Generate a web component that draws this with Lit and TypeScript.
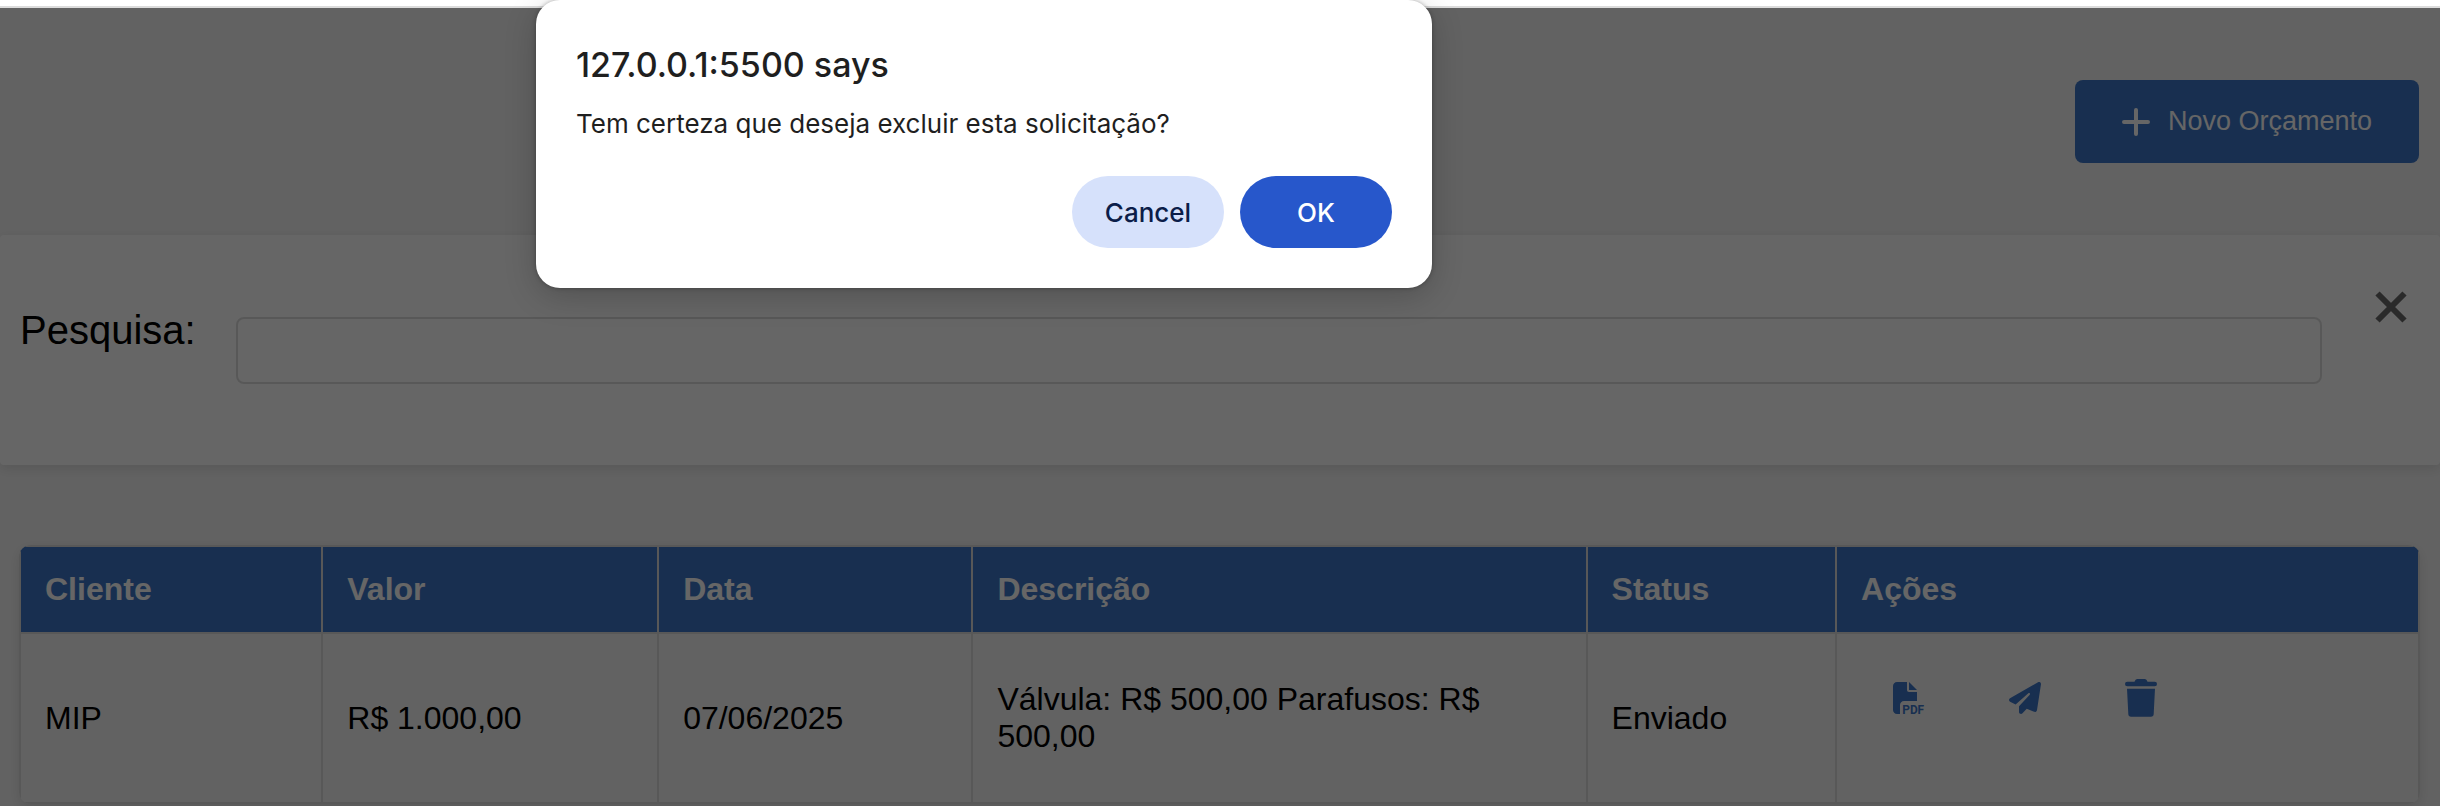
import { LitElement, html, css, svg } from "lit";
import { customElement, state } from "lit/decorators.js";

interface Quote {
  client: string;
  value: string;
  date: string;
  description: string;
  status: string;
}

const icons = {
  plus: svg`<path d="M14 2v24M2 14h24" fill="none" stroke="currentColor" stroke-width="4" stroke-linecap="round"/>`,
  close: svg`<path d="M2.500 2.500l27 27M29.500 2.500l-27 27" fill="none" stroke="currentColor" stroke-width="6"/>`,
  plane: svg`<path fill="currentColor" d="M498.100 5.600c10.100 7 15.400 19.100 13.500 31.200l-64 416c-1.500 9.700-7.400 18.200-16 23s-18.900 5.400-28 1.600L284 427.700l-68.500 74.100c-8.900 9.700-22.900 12.900-35.200 8.100S160 493.200 160 480V396.400c0-4 1.500-7.800 4.200-10.700L331.800 202.800c5.800-6.300 5.600-16-.4-22s-15.700-6.400-22-.7L106 360.800 17.700 316.600C7.100 311.300 .3 300.700 0 288.900s5.900-22.800 16.100-28.700l448-256c10.700-6.100 23.900-5.500 34 1.400z"/>`,
  trash: svg`<g fill="currentColor"><path d="M9.500 3C10 1 11 0 12.500 0h7C21 0 22 1 22.500 3z"/><rect y="2.700" width="32" height="4.600" rx="2.300"/><path d="M2 9.700h28l-1.300 25.300a2.800 2.800 0 0 1-2.800 2.700H6.100A2.800 2.800 0 0 1 3.300 35z"/></g>`,
  pdf: svg`<g fill="currentColor"><path d="M0 64C0 28.700 28.700 0 64 0h160v128c0 17.700 14.300 32 32 32h128v144H176c-35.300 0-64 28.700-64 64v144H64c-35.300 0-64-28.700-64-64zM384 128H256V0z"/><text class="pdf-label" x="148" y="508">PDF</text></g>`,
};

@customElement("app-root")
export class AppRoot extends LitElement {
  @state() private quotes: Quote[] = [
    {
      client: "MIP",
      value: "R$ 1.000,00",
      date: "07/06/2025",
      description: "Válvula: R$ 500,00 Parafusos: R$ 500,00",
      status: "Enviado",
    },
  ];

  static styles = css`
    :host {
      display: block;
      font-family: "Liberation Sans", Arial, sans-serif;
      color: #000;
      position: relative;
    }
    * {
      box-sizing: border-box;
    }
    button {
      font: inherit;
      border: 0;
      padding: 0;
      display: inline-flex;
      align-items: center;
      justify-content: center;
      background: none;
      cursor: pointer;
    }
    svg {
      display: block;
      flex: none;
      overflow: visible;
    }
    .strip {
      height: 8px;
      background: #fff;
      border-bottom: 2px solid #dcdcdc;
    }
    .page {
      position: relative;
      background: #f5f5f5;
      min-height: calc(100vh - 8px);
    }
    .scrim {
      position: absolute;
      inset: 0;
      background: rgba(0, 0, 0, 0.6);
    }
    .toolbar {
      display: flex;
      justify-content: flex-end;
      padding: 72px 21px;
    }
    .new-quote {
      height: 83px;
      padding: 0 47px;
      gap: 18px;
      border-radius: 8px;
      background: #3c76c8;
      color: #fff;
      font-size: 27px;
      line-height: 31px;
    }
    .search {
      display: flex;
      align-items: flex-start;
      height: 230px;
      padding: 52px 20px;
      border-radius: 4px;
      background: #fff;
      box-shadow: 0 4px 12px rgba(0, 0, 0, 0.1);
    }
    .search label {
      font-size: 40px;
      line-height: 46px;
      padding-top: 20px;
      margin-right: 40px;
    }
    .search input {
      flex: 1;
      min-width: 0;
      height: 67px;
      margin-top: 30px;
      padding: 0 20px;
      border: 2px solid #ddd;
      border-radius: 8px;
      background: transparent;
      font: inherit;
      font-size: 32px;
    }
    .close {
      width: 58px;
      height: 40px;
      margin-left: 40px;
      color: #696969;
    }
    .table-card {
      margin: 80px 20px 0 19px;
      border-radius: 12px;
      overflow: hidden;
      box-shadow: 0 4px 12px rgba(0, 0, 0, 0.1);
    }
    table {
      width: 100%;
      table-layout: fixed;
      border-collapse: collapse;
      font-size: 32px;
      line-height: 37px;
    }
    th,
    td {
      padding: 24px;
      border: 2px solid #ddd;
      text-align: left;
    }
    th {
      background: #3c76c8;
      color: #fff;
    }
    .c-client { width: 12.6%; }
    .c-value { width: 14%; }
    .c-date { width: 13.1%; }
    .c-description { width: 25.6%; }
    .c-status { width: 10.4%; }
    .actions {
      display: flex;
      gap: 20px;
      padding-bottom: 40px;
    }
    .actions button {
      width: 96px;
      height: 80px;
      color: #3c76c8;
    }
    .pdf-label {
      font: 700 190px Roboto, sans-serif;
    }
    .dialog {
      position: absolute;
      top: 0;
      left: calc(50% - 684px);
      width: 896px;
      margin: 0;
      padding: 40px;
      border: 0;
      border-radius: 24px;
      background: #fff;
      color: #1f1f1f;
      font-family: Inter, sans-serif;
      box-shadow: 0 8px 32px rgba(0, 0, 0, 0.2), 0 0 4px rgba(0, 0, 0, 0.3);
    }
    .dialog h1 {
      margin: 0 0 14px;
      font-size: 34px;
      font-weight: 500;
      line-height: 50px;
    }
    .dialog p {
      margin: 0 0 32px;
      font-size: 26px;
      line-height: 40px;
    }
    .dialog-buttons {
      display: flex;
      justify-content: flex-end;
      gap: 16px;
    }
    .dialog-buttons button {
      width: 152px;
      height: 72px;
      border-radius: 36px;
      font-size: 26px;
      font-weight: 500;
    }
    .cancel {
      background: #d6e1fb;
      color: #0b1d49;
    }
    .ok {
      background: #2757cb;
      color: #fff;
    }
  `;

  render() {
    return html`
      <div class="strip"></div>
      <main class="page">
        <div class="toolbar">
          <button class="new-quote" type="button">
            <svg width="28" height="28" viewBox="0 0 28 28" aria-hidden="true">${icons.plus}</svg>
            Novo Orçamento
          </button>
        </div>
        <section class="search">
          <label for="search">Pesquisa:</label>
          <input id="search" type="text" />
          <button class="close" type="button" aria-label="Fechar">
            <svg width="32" height="32" viewBox="0 0 32 32">${icons.close}</svg>
          </button>
        </section>
        <div class="table-card">
          <table>
            <thead>
              <tr>
                <th class="c-client">Cliente</th>
                <th class="c-value">Valor</th>
                <th class="c-date">Data</th>
                <th class="c-description">Descrição</th>
                <th class="c-status">Status</th>
                <th>Ações</th>
              </tr>
            </thead>
            <tbody>
              ${this.quotes.map(
                (q) => html`<tr>
                  <td>${q.client}</td>
                  <td>${q.value}</td>
                  <td>${q.date}</td>
                  <td>${q.description}</td>
                  <td>${q.status}</td>
                  <td>
                    <div class="actions">
                      <button type="button" aria-label="Gerar PDF">
                        <svg width="32" height="32" viewBox="0 0 512 512">${icons.pdf}</svg>
                      </button>
                      <button type="button" aria-label="Enviar">
                        <svg width="32" height="32" viewBox="0 0 512 512">${icons.plane}</svg>
                      </button>
                      <button type="button" aria-label="Excluir">
                        <svg width="32" height="38" viewBox="0 0 32 38">${icons.trash}</svg>
                      </button>
                    </div>
                  </td>
                </tr>`
              )}
            </tbody>
          </table>
        </div>
        <div class="scrim"></div>
      </main>
      <div class="dialog" role="alertdialog" aria-modal="true" aria-labelledby="dialog-title" aria-describedby="dialog-text">
        <h1 id="dialog-title">127.0.0.1:5500 says</h1>
        <p id="dialog-text">Tem certeza que deseja excluir esta solicitação?</p>
        <div class="dialog-buttons">
          <button class="cancel" type="button">Cancel</button>
          <button class="ok" type="button">OK</button>
        </div>
      </div>
    `;
  }
}
